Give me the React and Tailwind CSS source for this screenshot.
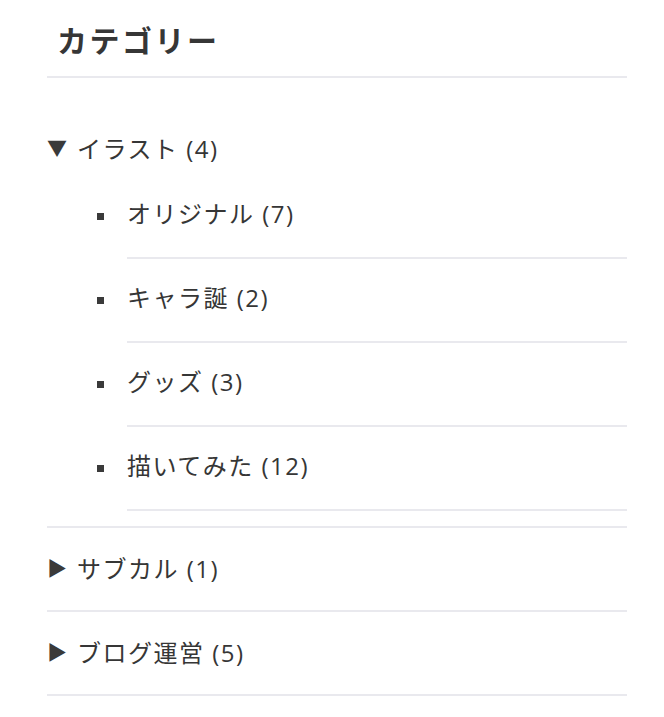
import React from "react";

const font = {
  fontFamily: '"Open Sans", "Noto Sans CJK JP", sans-serif',
};

const children = [
  { name: "オリジナル", count: 7 },
  { name: "キャラ誕", count: 2 },
  { name: "グッズ", count: 3 },
  { name: "描いてみた", count: 12 },
];

function Arrow({ open }) {
  return (
    <span className="inline-block w-[30px] text-[20px] leading-[28px] text-[#3a3a3a]">
      {open ? "▼" : "▶"}
    </span>
  );
}

export default function App() {
  return (
    <div className="bg-white min-h-[717px] pl-[47px] pr-[37px] text-[#363636]" style={font}>
      {/* Widget title */}
      <h2 className="pt-[22px] pb-[16px] pl-[10px] text-[30px] leading-[38px] font-bold tracking-[2.5px] border-b-2 border-[#e9e9ee]">
        カテゴリー
      </h2>

      <ul className="mt-[57px]">
        {/* Open parent */}
        <li className="pb-[15px] border-b-2 border-[#e9e9ee]">
          <div className="flex items-center text-[24px] leading-[28px] tracking-[1.5px]">
            <Arrow open />
            <span>イラスト (4)</span>
          </div>
          <ul className="mt-[12px]">
            {children.map((c) => (
              <li key={c.name} className="flex items-center">
                <span className="w-[80px] flex justify-start pl-[50px] pb-[2px]">
                  <span className="block w-[7px] h-[7px] bg-[#3a3a3a]" />
                </span>
                <div className="flex-1 pt-[25px] pb-[29px] border-b-2 border-[#e9e9ee] text-[24px] leading-[28px] tracking-[1.5px]">
                  {c.name} ({c.count})
                </div>
              </li>
            ))}
          </ul>
        </li>

        {/* Closed parents */}
        {[
          { name: "サブカル", count: 1 },
          { name: "ブログ運営", count: 5 },
        ].map((p) => (
          <li
            key={p.name}
            className="flex items-center py-[27px] border-b-2 border-[#e9e9ee] text-[24px] leading-[28px] tracking-[1.5px]"
          >
            <Arrow />
            <span>
              {p.name} ({p.count})
            </span>
          </li>
        ))}
      </ul>
    </div>
  );
}
